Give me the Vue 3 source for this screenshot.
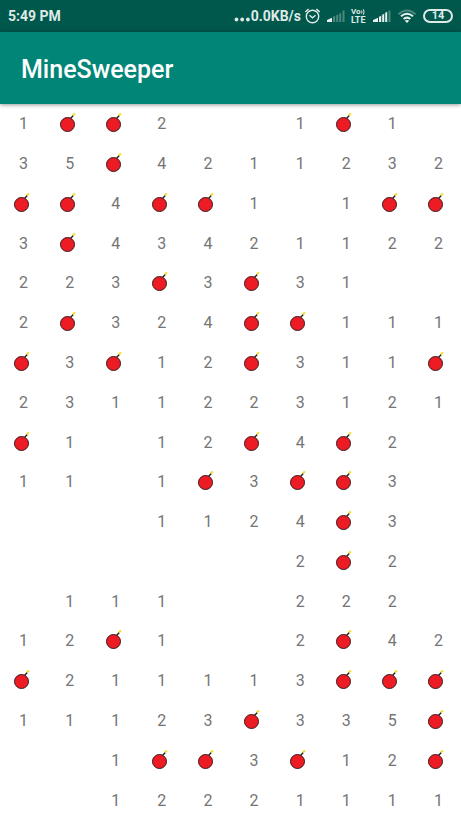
<script setup>
const layout = [
  '1**2  1*1 ',
  '35*4211232',
  '**4**1 1**',
  '3*43421122',
  '223*3*31  ',
  '2*324**111',
  '*3*12*311*',
  '2311223121',
  '*1 12*4*2 ',
  '11 1*3**3 ',
  '   1124*3 ',
  '      2*2 ',
  ' 111  222 ',
  '12*1  2*42',
  '*211113***',
  '11123*335*',
  '  1**3*12*',
  '  12221111',
]

const cells = layout.flatMap((row, r) =>
  [...row].map((value, c) => ({ id: `${r}-${c}`, value, mine: value === '*' }))
)

function label(cell) {
  if (cell.mine) return 'Mine'
  return cell.value === ' ' ? 'Empty' : cell.value
}
</script>

<template>
  <div class="screen">
    <div class="status">
      <span class="time">5:49 PM</span>
      <div class="indicators">
        <span class="speed"><svg class="dots" width="17" height="16" viewBox="0 0 17 16" aria-hidden="true">
          <circle cx="2.5" cy="11.500" r="1.900" /><circle cx="8.200" cy="11.500" r="1.900" /><circle cx="13.900" cy="11.500" r="1.900" />
        </svg>0.0KB/s</span>
        <svg class="alarm" width="16" height="16" viewBox="0 0 16 16" aria-hidden="true">
          <circle cx="8.500" cy="8.500" r="6.200" />
          <path d="M1.300 4 4.600 1.100M15.700 4 12.400 1.100M5.500 7.300l3 2.500 3-2.500" />
        </svg>
        <svg class="signal" width="19" height="16" viewBox="0 0 19 16" aria-hidden="true">
          <path class="on" d="M1 14v-2l5-2.200V14z" />
          <path class="off" d="M7 14V8.800l2.200-1V14zM10.200 14V7.300l2-1V14zM13.200 14V5.800l2-1V14zM16.500 14V2.500h2V14z" />
        </svg>
        <span class="volte"><span class="vo">Vo<svg width="4" height="8" viewBox="0 0 4 8" aria-hidden="true"><path d="M.5 2.500q1 1.500 0 3M2.300 1.200q1.600 2.800 0 5.600" /></svg></span><span class="lte">LTE</span></span>
        <svg class="signal" width="19" height="16" viewBox="0 0 19 16" aria-hidden="true">
          <path class="on" d="M1 14v-2l5-2.200V14zM7 14V8.800l2.200-1V14zM10.200 14V6.800l2-1V14zM13.200 14V4.800l2-1V14z" />
          <path class="off" d="M16.500 14V2.500h2V14z" />
        </svg>
        <svg class="wifi" width="20" height="16" viewBox="0 0 20 16" aria-hidden="true">
          <path class="faint" d="M1.500 6.200q8.500-7.500 17 0" />
          <path d="M4 8.300q6-5.200 12 0M6.600 11q3.400-2.800 6.800 0" />
          <path class="tip" d="M7.800 12.700q2.200-1.600 4.400 0L10 15z" />
        </svg>
        <span class="battery"><span>14</span></span>
      </div>
    </div>
    <header class="bar">
      <h1>MineSweeper</h1>
    </header>
    <main class="board">
      <button v-for="cell in cells" :key="cell.id" type="button" class="cell" :aria-label="label(cell)">
        <svg v-if="cell.mine" class="mine" width="20" height="22" viewBox="0 0 20 22" aria-hidden="true">
          <path class="fuse" d="M10.500 5.500 13.300 2.500" />
          <path class="spark" d="M12.900 2.500 14.900.3" />
          <circle cx="7.500" cy="11.500" r="7" />
        </svg>
        <template v-else>{{ cell.value }}</template>
      </button>
    </main>
  </div>
</template>

<style>
body {
  margin: 0;
  background: #fff;
}
</style>

<style scoped>
.screen {
  display: flex;
  flex-direction: column;
  min-height: 100vh;
  font-family: Roboto, "Liberation Sans", sans-serif;
}
.status {
  display: flex;
  align-items: center;
  justify-content: space-between;
  height: 32px;
  padding: 0 8px;
  background: #00574b;
  color: #dfeae8;
}
.time {
  font-size: 14px;
  font-weight: 700;
}
.indicators {
  display: flex;
  align-items: center;
  gap: 6px;
}
.speed {
  display: flex;
  align-items: center;
  font-size: 14px;
  font-weight: 700;
}
.dots {
  fill: #dfeae8;
}
.alarm {
  margin-left: -3px;
  fill: none;
  stroke: #dfeae8;
  stroke-width: 1.4;
}
.on {
  fill: #e8f0ee;
}
.off {
  fill: #4b877f;
}
.volte {
  display: flex;
  flex-direction: column;
  width: 15px;
  font-size: 8px;
  font-weight: 700;
  line-height: 8px;
}
.vo {
  display: flex;
}
.lte {
  font-size: 9px;
}
.vo svg {
  flex: none;
  fill: none;
  stroke: #dfeae8;
}
.wifi {
  fill: none;
  stroke: #e8f0ee;
  stroke-width: 2;
}
.wifi .faint {
  stroke: #4b877f;
}
.wifi .tip {
  fill: #e8f0ee;
  stroke: none;
}
.battery {
  box-sizing: border-box;
  width: 30px;
  height: 14px;
  border: 2px solid #dfeae8;
  border-radius: 7px;
  font-size: 11px;
  font-weight: 700;
  line-height: 10px;
  text-align: center;
}
.bar {
  display: flex;
  align-items: center;
  height: 72px;
  padding: 3px 21px 0;
  box-sizing: border-box;
  background: #008577;
  box-shadow: 0 1px 4px rgba(0, 0, 0, 0.4);
}
h1 {
  margin: 0;
  color: #fff;
  font-size: 25px;
  font-weight: 500;
  line-height: 32px;
}
.board {
  display: grid;
  flex: 1;
  grid-template-columns: repeat(10, 1fr);
  grid-auto-rows: 1fr;
}
.cell {
  display: flex;
  align-items: center;
  justify-content: center;
  min-width: 0;
  padding: 1px 0 0 1px;
  border: 0;
  background: none;
  color: #757575;
  font: 400 16px/20px Roboto, "Liberation Sans", sans-serif;
}
.mine circle {
  fill: #ed1c24;
  stroke: #3a1a1c;
  stroke-width: 1;
}
.fuse {
  stroke: #222;
  stroke-width: 1.4;
}
.spark {
  stroke: #f4dc2c;
  stroke-width: 2;
}
</style>
